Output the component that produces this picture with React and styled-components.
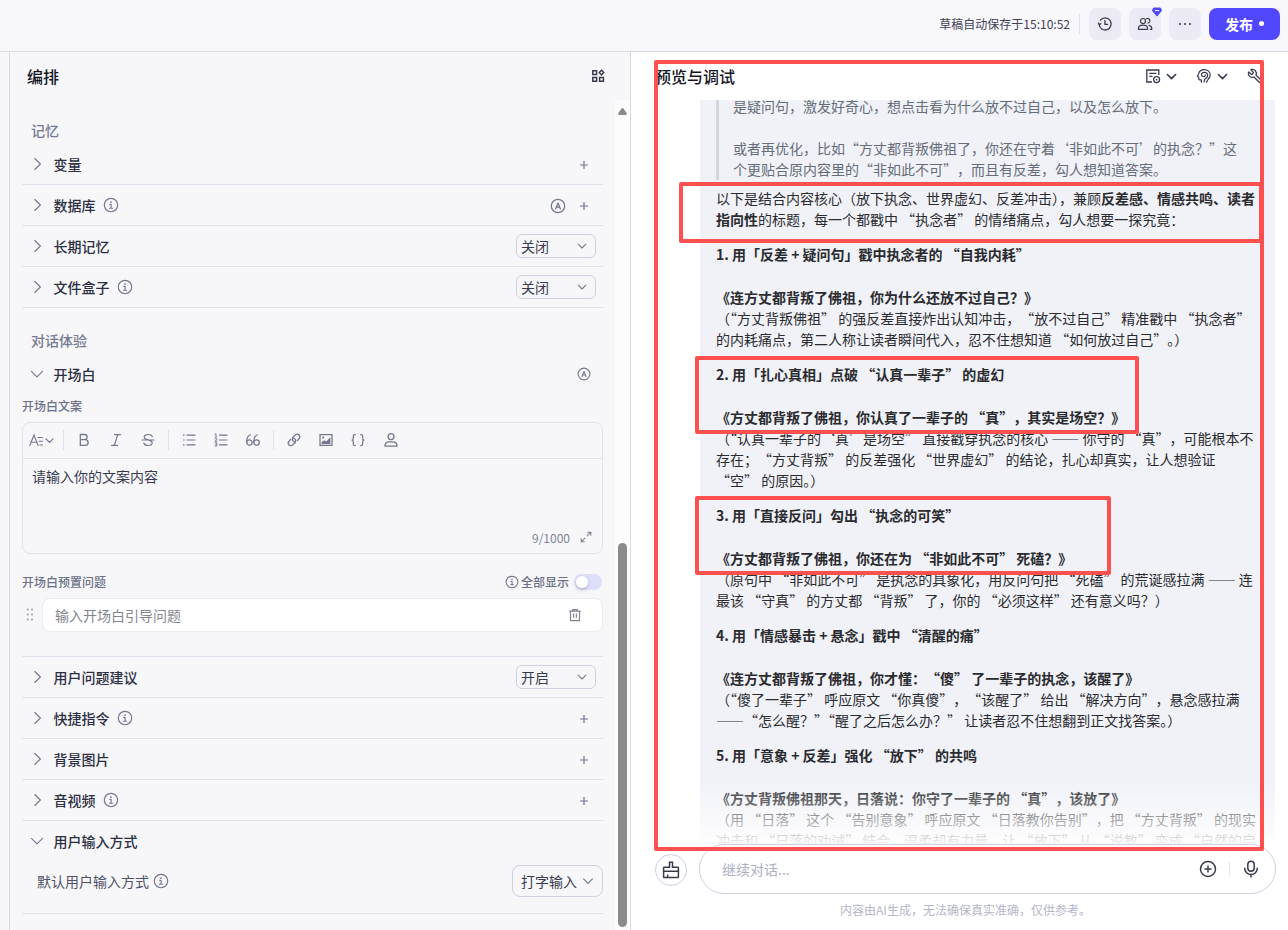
import React from "react";
import styled, { createGlobalStyle, css } from "styled-components";
import { Wrench } from "lucide-react";

const GlobalStyle = createGlobalStyle`
  * { box-sizing: border-box; }
  body {
    margin: 0;
    font-family: "Noto Sans CJK SC", "Noto Sans", sans-serif;
    font-size: 14px;
    color: #383b4e;
    background: #fff;
  }
  p { margin: 0; }
`;

/* ---------- icons ---------- */

const Svg = styled.svg`
  display: block;
  flex: none;
  fill: none;
  stroke: currentColor;
  stroke-width: ${(p) => p.$w || 1.2};
  stroke-linecap: ${(p) => (p.$sharp ? "butt" : "round")};
  stroke-linejoin: ${(p) => (p.$sharp ? "miter" : "round")};
`;

const Icon = ({ size = 16, box = 16, w, sharp, children }) => (
  <Svg width={size} height={size} viewBox={`0 0 ${box} ${box}`} $w={w} $sharp={sharp} aria-hidden="true">
    {children}
  </Svg>
);

const ChevronRight = () => (
  <Icon w={1.1}><path d="M5.8 2.5 11.4 8l-5.6 5.5" /></Icon>
);
const ChevronDown = () => (
  <Icon w={1.1}><path d="M2.5 5.3 8 10.8l5.5-5.5" /></Icon>
);
const SmallChevron = ({ size = 12, w = 1.1 }) => (
  <Icon size={size} box={12} w={w}><path d="M2.2 4.2 6 8l3.8-3.8" /></Icon>
);
const InfoIcon = ({ size = 16 }) => (
  <Icon size={size} w={1.15}>
    <circle cx="8" cy="8" r="6.7" />
    <circle cx="8" cy="5.1" r="0.9" fill="currentColor" stroke="none" />
    <path d="M6.8 7.4h1.3v3.7M6.5 11.2h3.1" />
  </Icon>
);
const AutoIcon = ({ size = 16 }) => (
  <Icon size={size} w={1.25}>
    <circle cx="8" cy="8" r="6.7" />
    <path d="M5.6 11 8 5l2.4 6M6.5 9.2h3" />
  </Icon>
);
const PlusIcon = () => (
  <Icon w={1.2} sharp><path d="M8 4v8M4 8h8" /></Icon>
);
const GridIcon = () => (
  <Icon w={1.5} sharp>
    <path d="M2.8 2.7h3.8v3.8H2.8zM2.8 9.5h3.8v3.8H2.8zM9.6 9.5h3.8v3.8H9.6zM11.5 2.3l2.2 2.300-2.200 2.300-2.200-2.300z" />
  </Icon>
);
const HistoryIcon = () => (
  <Icon w={1.3}>
    <path d="M2.1 8.3A6 6 0 1 0 3.4 4.2M1.4 7.1l.8 1.5 1.6-.9M7.9 4.6v3.7h2.7" />
  </Icon>
);
const PeopleIcon = () => (
  <Icon w={1.2}>
    <circle cx="6" cy="5" r="2.5" />
    <path d="M1.4 13.3c-.3-3 1.7-4.2 4.6-4.2s4.900 1.200 4.600 4.200z" />
    <path d="M9.500 2.700a2.300 2.300 0 1 1 1.400 4.300M12 9.300c2 .5 3 1.800 2.800 4h-1.600" />
  </Icon>
);
const DotsIcon = () => (
  <Icon><g fill="currentColor" stroke="none"><circle cx="3" cy="8" r="1" /><circle cx="8" cy="8" r="1" /><circle cx="13" cy="8" r="1" /></g></Icon>
);
const GemIcon = () => (
  <Svg width="10" height="10" viewBox="0 0 10 9" $w={1} aria-hidden="true">
    <path d="M2 0h6q.6 0 .9.500L9.800 2.300q.3.600-.1 1.100L5.600 8.400q-.6.600-1.200 0L.3 3.400q-.4-.5-.1-1.100L1.100.5Q1.400 0 2 0z" fill="#5147ff" stroke="none" />
    <path d="M3.200 3.100h3.600" stroke="#fff" />
  </Svg>
);
const FontIcon = () => (
  <Icon size={15} box={15} w={1.1} sharp>
    <path d="M.6 13 5 2l4.300 11M2.200 9.300h5.600M8.600 4.500H14M9.600 8.200H14M10.600 12H14" />
  </Icon>
);
const BoldIcon = () => (
  <Icon w={1.3}><path d="M4.300 2.500h4.200a2.600 2.600 0 0 1 0 5.200H4.300zM4.300 7.700h5a2.850 2.850 0 0 1 0 5.700h-5zM4.300 2.500v11" /></Icon>
);
const ItalicIcon = () => (
  <Icon w={1.2}><path d="M6.600 2.600h6M3.500 13.400h6M9.700 2.600 6.400 13.400" /></Icon>
);
const StrikeIcon = () => (
  <Icon w={1.2}><path d="M12.300 4.600C11.700 3.200 10.100 2.500 8.200 2.500c-2.300 0-4 1-4 2.600 0 3.400 8 2.200 8 5.500 0 1.800-1.700 2.900-4.100 2.900-2.100 0-3.800-.9-4.300-2.500M2 8h12" /></Icon>
);
const BulletIcon = () => (
  <Icon w={1.2} sharp><path d="M5.500 3.200h9M5.500 8h9M5.500 12.800h9M2 3.200h1.600M2 8h1.600M2 12.800h1.600" /></Icon>
);
const OrderedIcon = () => (
  <Icon w={1.200} sharp>
    <path d="M6 3.200h8.500M6 8h8.500M6 12.800h8.500" />
    <path d="M1.600 2.300 3 1.700v3.200M1.600 5h2.600M1.700 6.700h2.100v1.200L1.900 9.300h2.300M1.700 10.800h2.200v3.300H1.700M2.200 12.400h1.700" strokeWidth="0.9" />
  </Icon>
);
const QuoteIcon = () => (
  <Icon w={1.2}>
    <circle cx="4.500" cy="10.500" r="2.700" /><circle cx="11.600" cy="10.500" r="2.700" />
    <path d="M1.800 10.500c-.2-4 .9-6.800 3.600-7.700M8.900 10.500c-.2-4 .9-6.800 3.600-7.700" />
  </Icon>
);
const LinkIcon = () => (
  <Icon w={1.250}>
    <path d="M8.300 9.700a2.700 2.700 0 0 1-1.500-4.200l2.400-2.400a2.650 2.650 0 0 1 3.800 3.700l-1.600 1.700M7.700 6.300a2.700 2.700 0 0 1 1.500 4.200l-2.400 2.400a2.650 2.650 0 0 1-3.800-3.700l1.600-1.700" />
  </Icon>
);
const ImageIcon = () => (
  <Icon w={1.250} sharp>
    <path d="M2 2.600h12v10.800H2z" />
    <path d="M3.600 12v-2l2.600-1.800 2 1.200 4.200-4.200V12z" fill="currentColor" stroke="none" />
    <circle cx="5.200" cy="5.500" r="1.100" fill="currentColor" stroke="none" />
  </Icon>
);
const BracesIcon = () => (
  <Icon w={1.250}>
    <path d="M5.300 2.500H4.700q-1.400 0-1.400 1.400v2.400Q3.300 8 2 8q1.300 0 1.300 1.700v2.400q0 1.400 1.400 1.400h.6M10.700 2.500h.6q1.400 0 1.400 1.400v2.400Q12.700 8 14 8q-1.300 0-1.300 1.700v2.400q0 1.400-1.400 1.400h-.6" />
  </Icon>
);
const PersonIcon = () => (
  <Icon w={1.300}>
    <circle cx="8" cy="4.600" r="3" />
    <path d="M2.500 14.200c-.5 0-.6-.4-.5-.9.300-2.400 1.900-3.500 4-3.500h4c2.100 0 3.700 1.100 4 3.500.1.500 0 .9-.5.9z" />
  </Icon>
);
const ExpandIcon = () => (
  <Icon size={12} box={12} w={1.1} sharp>
    <path d="M7.300 1.200h3.500v3.500M10.800 1.200 6.900 5.100M4.700 10.800H1.200V7.300M1.200 10.800l3.900-3.900" />
  </Icon>
);
const TrashIcon = () => (
  <Icon size={14} box={14} w={1.200} sharp>
    <path d="M1.300 3.100h11.400M4.700 3V1.600h4.600V3M2.500 3.300v9.400h9V3.300M5.600 5.500v4.300M8.400 5.500v4.300" />
  </Icon>
);
const DragIcon = () => (
  <Svg width="8" height="14" viewBox="0 0 8 14" aria-hidden="true">
    <g fill="currentColor" stroke="none">
      {[1.500, 6.500, 11.500].map((y) => (
        <React.Fragment key={y}><circle cx="1.800" cy={y} r="1.100" /><circle cx="6" cy={y} r="1.100" /></React.Fragment>
      ))}
    </g>
  </Svg>
);
const NoteIcon = () => (
  <Icon w={1.300} sharp>
    <path d="M7 14H1.800V2h12v5M4.300 5.300h7M4.300 8.300h3.200" />
    <circle cx="11.600" cy="11.600" r="3" /><circle cx="11.600" cy="11.600" r="0.900" fill="currentColor" stroke="none" />
  </Icon>
);
const BrainIcon = () => (
  <Icon w={1.200}>
    <path d="M5.400 14.300v-2.500H3.600q-.8 0-.8-.8V9.200L1.400 8.300l1.300-2.600C3.200 3 5.400 1.600 8.200 1.600c3.500 0 6 2.300 6 5.500 0 2-.8 3.400-2.200 4.400l-1.500 2.800" />
    <path d="M8 14l1-3.200c1.300-.4 2.600-1.900 2.600-3.700 0-1.600-1.100-2.700-2.900-2.700-2 0-3.200 1-3.200 2.400 0 1.200.8 1.700 1.700 1.700M7.200 8.500c1.200.2 2.100-.4 2.100-1.700" />
  </Icon>
);
const WrenchIcon = styled(Wrench).attrs({ size: 16, strokeWidth: 1.9 })`
  display: block;
  flex: none;
  transform: scaleX(-1);
`;
const BroomIcon = () => (
  <Icon size={18} box={18} w={1.500} sharp>
    <path d="M7.500 6.200V1.200h3v5h5.300q.6 0 .6.600v9.200q0 .6-.6.600H2.200q-.6 0-.6-.6V6.800q0-.6.600-.6zM1.600 10.300h14.800M5.600 16.500v-3" />
  </Icon>
);
const AddCircleIcon = () => (
  <Icon size={18} box={18} w={1.500}><circle cx="9" cy="9" r="7.500" /><path d="M9 5.900v6.200M5.900 9h6.200" /></Icon>
);
const MicIcon = () => (
  <Icon size={18} box={18} w={1.500}><rect x="5.800" y="1.200" width="6.400" height="10" rx="3.200" /><path d="M2.700 8.300a6.300 6.300 0 0 0 12.600 0M9 14.600V17" /></Icon>
);

/* ---------- shell ---------- */

const Page = styled.div`
  position: relative;
  display: flex;
  flex-direction: column;
  width: 1288px;
  height: 930px;
  overflow: hidden;
`;
const TopBar = styled.header`
  flex: none;
  display: flex;
  align-items: flex-start;
  justify-content: flex-end;
  height: 52px;
  padding: 8px 8px 0 0;
  gap: 8px;
  background: #f7f7fc;
  border-bottom: 1px solid #d9dae3;
`;
const SavedNote = styled.span`
  margin-right: 1px;
  line-height: 32px;
  font-size: 12px;
  color: #3f4254;
`;
const BarDivider = styled.i`
  width: 1px;
  height: 20px;
  margin: 6px 1px 0 0;
  background: #e1e1ea;
`;
const SquareButton = styled.button`
  position: relative;
  display: flex;
  align-items: center;
  justify-content: center;
  width: 32px;
  height: 32px;
  padding: 0;
  border: 0;
  border-radius: 8px;
  background: #ecebf5;
  color: #383b4e;
`;
const Badge = styled.span`
  position: absolute;
  top: -1px;
  right: -1px;
`;
const PublishButton = styled.button`
  display: flex;
  align-items: center;
  gap: 6px;
  width: 71px;
  height: 32px;
  padding: 0 0 0 16px;
  border: 0;
  border-radius: 8px;
  background: #5147ff;
  color: #fff;
  font: 700 14px/32px "Noto Sans CJK SC", sans-serif;
`;
const Dot = styled.i`
  width: 5px;
  height: 5px;
  margin-bottom: 1px;
  border-radius: 50%;
  background: #fff;
`;
const Columns = styled.div`
  flex: 1;
  min-height: 0;
  display: flex;
`;
const Gutter = styled.aside`
  flex: none;
  width: 10px;
  background: #f7f7fa;
  border-right: 1px solid #d9dade;
`;
const Panel = styled.section`
  display: flex;
  flex-direction: column;
  min-width: 0;
  ${(p) =>
    p.$preview
      ? css`flex: 1; background: #fff;`
      : css`flex: none; width: 621px; background: #f7f7fa; border-right: 1px solid #d9dae0;`}
`;
const PanelHeader = styled.div`
  flex: none;
  display: flex;
  align-items: center;
  height: 48px;
  padding: ${(p) => p.$pad};
`;
const PanelTitle = styled.h2`
  flex: 1;
  margin: 0;
  font-size: 16px;
  line-height: 24px;
  font-weight: 500;
  color: #14161f;
`;
const Scroller = styled.div`
  flex: 1;
  min-height: 0;
  display: flex;
  overflow: hidden;
`;
const Settings = styled.div`
  flex: 1;
  padding: 0 12px;
`;
const Scrollbar = styled.div`
  flex: none;
  display: flex;
  flex-direction: column;
  justify-content: space-between;
  align-items: center;
  width: 15px;
  padding: 8px 0 3px;
  background: #fcfcfc;
`;
const Thumb = styled.div`
  width: 9px;
  height: 384px;
  border-radius: 5px;
  background: #8b8b8b;
`;

/* ---------- settings column ---------- */

const GroupTitle = styled.h3`
  margin: 0;
  padding: ${(p) => p.$top}px 0 2px 9px;
  font-size: 14px;
  line-height: 24px;
  font-weight: 500;
  color: #757a91;
`;
const RowBox = styled.div`
  display: flex;
  align-items: center;
  height: 41px;
  padding: 0 7px;
  color: #73778f;
  ${(p) => (p.$open ? css`padding-bottom: 1px;` : css`border-bottom: 1px solid #e0e1ec;`)}
`;
const RowLabel = styled.span`
  margin: 0 7.500px 0 8.500px;
  font-weight: 500;
  line-height: 22px;
  color: #2c2f42;
`;
const RowActions = styled.div`
  display: flex;
  align-items: center;
  gap: 10px;
  margin-left: auto;
  padding: ${(p) => p.$pad};
`;
const Select = styled.div`
  display: flex;
  align-items: center;
  justify-content: space-between;
  width: ${(p) => (p.$large ? 91 : 80)}px;
  height: ${(p) => (p.$large ? 32 : 24)}px;
  padding: ${(p) => (p.$large ? "0 7px 0 8px" : "0 7px 0 4px")};
  border: 1px solid #cfd0e2;
  border-radius: ${(p) => (p.$large ? 8 : 6)}px;
  color: #383b4e;
  line-height: 22px;
  svg { color: #777b8c; }
`;
const FieldLabel = styled.div`
  display: flex;
  align-items: center;
  height: ${(p) => p.$h}px;
  padding: ${(p) => p.$top || 0}px 0 ${(p) => p.$bottom || 0}px;
  font-size: 12px;
  line-height: 16px;
  font-weight: 500;
  color: #6d7188;
`;
const ShowAll = styled.span`
  display: flex;
  align-items: center;
  gap: 2px;
  margin: 0 1px 0 auto;
`;
const Toggle = styled.span`
  width: 28px;
  height: 16px;
  margin-left: 3px;
  padding: 2px;
  border-radius: 8px;
  background: #dddffb;
  &::before {
    content: "";
    display: block;
    width: 12px;
    height: 12px;
    border-radius: 50%;
    background: #fff;
    box-shadow: 0 2px 4px rgba(60, 60, 90, 0.25);
  }
`;
const Editor = styled.div`
  display: flex;
  flex-direction: column;
  height: 132px;
  border: 1px solid #e0e1ec;
  border-radius: 8px;
`;
const Toolbar = styled.div`
  flex: none;
  display: flex;
  height: 36px;
  padding-bottom: 1px;
  border-bottom: 1px solid #e0e1ec;
  color: #73778f;
`;
const Tool = styled.span`
  display: flex;
  align-items: center;
  justify-content: center;
  width: ${(p) => (p.$wide ? 36 : 32)}px;
  padding-left: ${(p) => (p.$wide ? 1 : 0)}px;
  &:last-child { padding-left: 2px; }
`;
const ToolDivider = styled.i`
  align-self: center;
  width: 1px;
  height: 20px;
  margin: 0 4px;
  background: #e0e1ec;
`;
const EditorText = styled.p`
  flex: 1;
  padding: 6px 9px;
  line-height: 22px;
`;
const Counter = styled.div`
  display: flex;
  align-items: center;
  justify-content: flex-end;
  gap: 10px;
  height: 22px;
  margin: 0 10px 5px 0;
  font-size: 12px;
  color: #808496;
`;
const QuestionRow = styled.div`
  display: flex;
  align-items: center;
  height: 59px;
  padding: 0 0 25px 4px;
  gap: 8px;
  border-bottom: 1px solid #e0e1ec;
  color: #a3a5ae;
`;
const QuestionInput = styled.div`
  flex: 1;
  display: flex;
  align-items: center;
  justify-content: space-between;
  height: 34px;
  padding: 0 20px 0 12px;
  border: 1px solid #ebebf0;
  border-radius: 8px;
  background: #fff;
  color: #84868f;
`;
const InputModeRow = styled.div`
  display: flex;
  align-items: center;
  height: 52px;
  padding: 0 0 14px 15px;
  gap: 4px;
  border-bottom: 1px solid #e0e1ec;
  color: #73778f;
`;
const ModeLabel = styled.span`
  color: #4e5265;
  line-height: 22px;
`;
const Spacer = styled.span`flex: 1;`;

const Row = ({ label, info, open, select, auto, plus }) => (
  <RowBox $open={open}>
    {open ? <ChevronDown /> : <ChevronRight />}
    <RowLabel>{label}</RowLabel>
    {info && <InfoIcon />}
    <RowActions $pad={select ? "0" : open ? "0 5px 0 0" : "2px 4px 0 0"}>
      {auto && <AutoIcon size={open ? 14 : 16} />}
      {plus && <PlusIcon />}
      {select && <Select>{select}<SmallChevron /></Select>}
    </RowActions>
  </RowBox>
);

/* ---------- preview column ---------- */

const HeaderTools = styled.div`
  display: flex;
  align-items: center;
  color: #383b4e;
`;
const ToolPair = styled.span`
  display: flex;
  align-items: center;
  gap: 4px;
  margin-right: 18px;
`;
const ChatArea = styled.div`
  position: relative;
  flex: none;
  height: 744px;
  padding: 0 13px 0 69px;
  overflow: hidden;
`;
const Fade = styled.div`
  position: absolute;
  inset: auto 0 0 0;
  height: 62px;
  background: linear-gradient(rgba(255, 255, 255, 0), rgba(255, 255, 255, 0.93));
`;
const Bubble = styled.article`
  height: 800px;
  margin-top: -4px;
  padding: 0 16px;
  background: #f1f2f8;
  color: #2a2b2f;
  line-height: 21px;
  white-space: nowrap;
`;
const Quote = styled.blockquote`
  margin: 0 0 8px;
  padding-left: 14px;
  border-left: 3px solid #d0d7de;
  color: #656d78;
`;
const Line = styled.p`
  height: 21px;
`;
const FullWidth = styled.span`
  text-spacing-trim: space-all;
`;
const Block = styled.section`
  margin-top: 14px;
`;
const BlockHeading = styled.h4`
  height: 22px;
  margin: 0 0 21px;
  font-size: 14px;
  font-weight: 700;
`;
const BlockTitle = styled.p`
  height: 21px;
  font-weight: 700;
`;
const Composer = styled.div`
  flex: none;
  display: flex;
  align-items: center;
  gap: 12px;
  height: 50px;
  padding: 0 12px 0 24px;
`;
const ClearButton = styled.button`
  display: flex;
  align-items: center;
  justify-content: center;
  width: 32px;
  height: 32px;
  padding: 0;
  margin-top: 2px;
  border: 1px solid #cfd0e2;
  border-radius: 50%;
  background: #fff;
  color: #383b4e;
`;
const MessageInput = styled.div`
  flex: 1;
  display: flex;
  align-items: center;
  height: 50px;
  padding: 0 15px 0 22px;
  border: 1px solid #cfd0e2;
  border-radius: 25px;
  background: #fff;
  color: #383b4e;
`;
const Placeholder = styled.span`
  flex: 1;
  color: #adafc4;
`;
const InputDivider = styled.i`
  width: 1px;
  height: 14px;
  margin: 0 12px;
  background: #e4e4ec;
`;
const Disclaimer = styled.p`
  padding: 7px 0 0 12px;
  text-align: center;
  font-size: 12px;
  line-height: 18px;
  color: #b4b6c8;
`;
const Mark = styled.div`
  position: absolute;
  left: ${(p) => p.$x}px;
  top: ${(p) => p.$y}px;
  width: ${(p) => p.$w}px;
  height: ${(p) => p.$h}px;
  border: 4px solid #ff5050;
  border-radius: 2px;
  pointer-events: none;
`;

/* Curly quotes next to a comma, colon or full stop keep their full advance. */
const Prose = ({ children }) =>
  children
    .split(/(”(?=[，。])|(?<=[，；：])“)/)
    .map((part, i) => (i % 2 ? <FullWidth key={i}>{part}</FullWidth> : part));

const blocks = [
  {
    heading: "1. 用「反差 + 疑问句」戳中执念者的 “自我内耗”",
    title: "《连方丈都背叛了佛祖，你为什么还放不过自己？》",
    lines: [
      "（“方丈背叛佛祖” 的强反差直接炸出认知冲击，“放不过自己” 精准戳中 “执念者”",
      "的内耗痛点，第二人称让读者瞬间代入，忍不住想知道 “如何放过自己”。）",
    ],
  },
  {
    heading: "2. 用「扎心真相」点破 “认真一辈子” 的虚幻",
    title: "《方丈都背叛了佛祖，你认真了一辈子的 “真”，其实是场空？》",
    lines: [
      "（“认真一辈子的‘真’是场空” 直接戳穿执念的核心 —— 你守的 “真”，可能根本不",
      "存在；“方丈背叛” 的反差强化 “世界虚幻” 的结论，扎心却真实，让人想验证",
      "“空” 的原因。）",
    ],
  },
  {
    heading: "3. 用「直接反问」勾出 “执念的可笑”",
    title: "《方丈都背叛了佛祖，你还在为 “非如此不可” 死磕？》",
    lines: [
      "（原句中 “非如此不可” 是执念的具象化，用反问句把 “死磕” 的荒诞感拉满 —— 连",
      "最该 “守真” 的方丈都 “背叛” 了，你的 “必须这样” 还有意义吗？）",
    ],
  },
  {
    heading: "4. 用「情感暴击 + 悬念」戳中 “清醒的痛”",
    title: "《连方丈都背叛了佛祖，你才懂：“傻” 了一辈子的执念，该醒了》",
    lines: [
      "（“傻了一辈子” 呼应原文 “你真傻”，“该醒了” 给出 “解决方向”，悬念感拉满",
      "——“怎么醒？”“醒了之后怎么办？” 让读者忍不住想翻到正文找答案。）",
    ],
  },
  {
    heading: "5. 用「意象 + 反差」强化 “放下” 的共鸣",
    title: "《方丈背叛佛祖那天，日落说：你守了一辈子的 “真”，该放了》",
    lines: [
      "（用 “日落” 这个 “告别意象” 呼应原文 “日落教你告别”，把 “方丈背叛” 的现实",
      "冲击和 “日落的劝诫” 结合，温柔却有力量，让 “放下” 从 “说教” 变成 “自然的启",
    ],
  },
];

export default function App() {
  return (
    <Page lang="zh-CN">
      <GlobalStyle />
      <TopBar>
        <SavedNote>草稿自动保存于15:10:52</SavedNote>
        <BarDivider />
        <SquareButton><HistoryIcon /></SquareButton>
        <SquareButton><PeopleIcon /><Badge><GemIcon /></Badge></SquareButton>
        <SquareButton><DotsIcon /></SquareButton>
        <PublishButton>发布<Dot /></PublishButton>
      </TopBar>

      <Columns>
        <Gutter />
        <Panel>
          <PanelHeader $pad="0 24px 0 17px">
            <PanelTitle>编排</PanelTitle>
            <GridIcon />
          </PanelHeader>
          <Scroller>
            <Settings>
              <GroupTitle $top={18}>记忆</GroupTitle>
              <Row label="变量" plus />
              <Row label="数据库" info auto plus />
              <Row label="长期记忆" select="关闭" />
              <Row label="文件盒子" info select="关闭" />
              <GroupTitle $top={20}>对话体验</GroupTitle>
              <Row label="开场白" open auto />
              <FieldLabel $h={27} $bottom={5}>开场白文案</FieldLabel>
              <Editor>
                <Toolbar>
                  <Tool $wide><FontIcon /><SmallChevron size={11} w={1.400} /></Tool>
                  <ToolDivider />
                  <Tool><BoldIcon /></Tool>
                  <Tool><ItalicIcon /></Tool>
                  <Tool><StrikeIcon /></Tool>
                  <ToolDivider />
                  <Tool><BulletIcon /></Tool>
                  <Tool><OrderedIcon /></Tool>
                  <Tool><QuoteIcon /></Tool>
                  <ToolDivider />
                  <Tool><LinkIcon /></Tool>
                  <Tool><ImageIcon /></Tool>
                  <Tool><BracesIcon /></Tool>
                  <Tool><PersonIcon /></Tool>
                </Toolbar>
                <EditorText>请输入你的文案内容</EditorText>
                <Counter>9/1000<ExpandIcon /></Counter>
              </Editor>
              <FieldLabel $h={44} $top={12}>
                开场白预置问题
                <ShowAll><InfoIcon size={14} />全部显示<Toggle /></ShowAll>
              </FieldLabel>
              <QuestionRow>
                <DragIcon />
                <QuestionInput>输入开场白引导问题<TrashIcon /></QuestionInput>
              </QuestionRow>
              <Row label="用户问题建议" select="开启" />
              <Row label="快捷指令" info plus />
              <Row label="背景图片" plus />
              <Row label="音视频" info plus />
              <Row label="用户输入方式" open />
              <InputModeRow>
                <ModeLabel>默认用户输入方式</ModeLabel>
                <InfoIcon />
                <Spacer />
                <Select $large>打字输入<SmallChevron size={14} w={1} /></Select>
              </InputModeRow>
            </Settings>
            <Scrollbar>
              <Svg width="9" height="7" viewBox="0 0 9 7" aria-hidden="true">
                <path d="M3.500.6q1-1 2 0L8.600 5q.6 2-.8 2H1.200Q-.2 7 .4 5z" fill="#8b8b8b" stroke="none" />
              </Svg>
              <Thumb />
            </Scrollbar>
          </Scroller>
        </Panel>

        <Panel $preview>
          <PanelHeader $pad="0 25px 0 24px">
            <PanelTitle>预览与调试</PanelTitle>
            <HeaderTools>
              <ToolPair><NoteIcon /><SmallChevron size={13} w={1.500} /></ToolPair>
              <ToolPair><BrainIcon /><SmallChevron size={13} w={1.500} /></ToolPair>
              <WrenchIcon />
            </HeaderTools>
          </PanelHeader>
          <ChatArea>
            <Bubble>
              <Quote>
                <Line>是疑问句，激发好奇心，想点击看为什么放不过自己，以及怎么放下。</Line>
                <Line />
                <Line>或者再优化，比如“方丈都背叛佛祖了，你还在守着‘非如此不可’的执念？”这</Line>
                <Line><Prose>个更贴合原内容里的“非如此不可”，而且有反差，勾人想知道答案。</Prose></Line>
              </Quote>
              <Line>以下是结合内容核心（放下执念、世界虚幻、反差冲击），兼顾<b>反差感、情感共鸣、读者</b></Line>
              <Line><b>指向性</b>的标题，每一个都戳中 “执念者” 的情绪痛点，勾人想要一探究竟：</Line>
              {blocks.map((b) => (
                <Block key={b.title}>
                  <BlockHeading>{b.heading}</BlockHeading>
                  <BlockTitle><Prose>{b.title}</Prose></BlockTitle>
                  {b.lines.map((t) => <Line key={t}><Prose>{t}</Prose></Line>)}
                </Block>
              ))}
            </Bubble>
            <Fade />
          </ChatArea>
          <Composer>
            <ClearButton><BroomIcon /></ClearButton>
            <MessageInput>
              <Placeholder>继续对话...</Placeholder>
              <AddCircleIcon />
              <InputDivider />
              <MicIcon />
            </MessageInput>
          </Composer>
          <Disclaimer>内容由AI生成，无法确保真实准确，仅供参考。</Disclaimer>
        </Panel>
      </Columns>

      <Mark $x={654} $y={60} $w={610} $h={791} />
      <Mark $x={679} $y={182} $w={584} $h={61} />
      <Mark $x={695} $y={356} $w={444} $h={78} />
      <Mark $x={695} $y={496} $w={416} $h={79} />
    </Page>
  );
}
